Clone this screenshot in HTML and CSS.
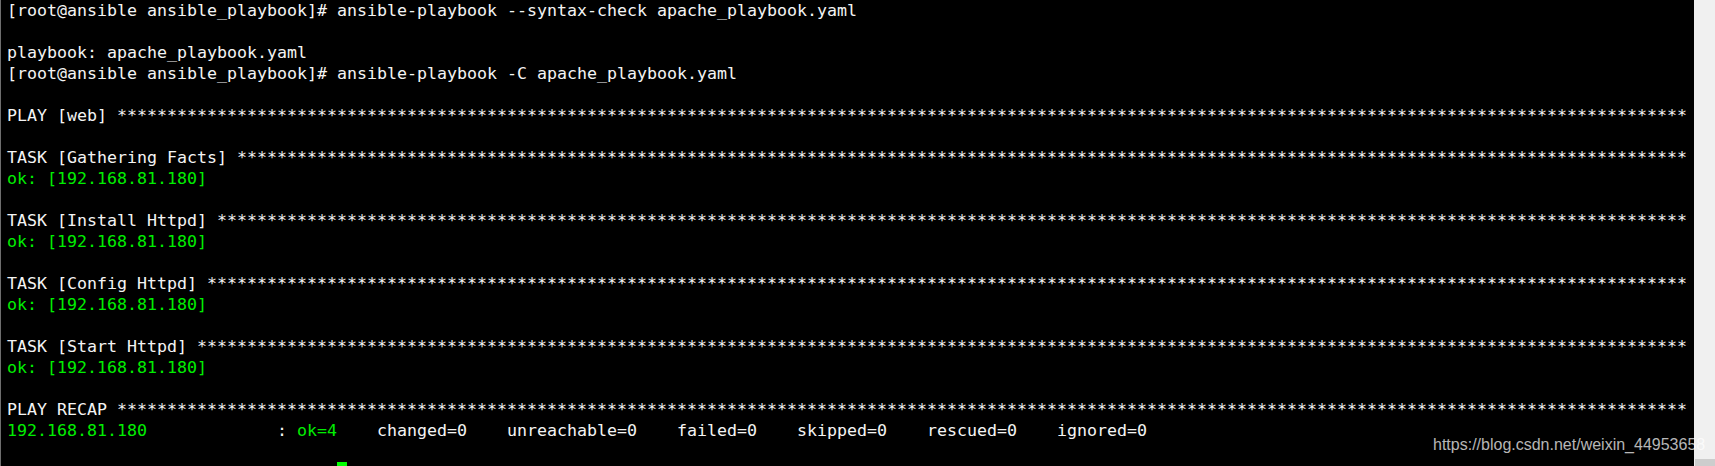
FILE: index.html
```html
<!DOCTYPE html>
<html lang="en">
<head>
<meta charset="utf-8">
<title>ansible-playbook terminal</title>
<link rel="stylesheet" href="styles.css">
</head>
<body>
<div class="window">
  <div class="terminal">
    <div class="ln">[root@ansible ansible_playbook]# ansible-playbook --syntax-check apache_playbook.yaml</div>
    <div class="ln"></div>
    <div class="ln">playbook: apache_playbook.yaml</div>
    <div class="ln">[root@ansible ansible_playbook]# ansible-playbook -C apache_playbook.yaml</div>
    <div class="ln"></div>
    <div class="ln">PLAY [web] *************************************************************************************************************************************************************</div>
    <div class="ln"></div>
    <div class="ln">TASK [Gathering Facts] *************************************************************************************************************************************************</div>
    <div class="ln g">ok: [192.168.81.180]</div>
    <div class="ln"></div>
    <div class="ln">TASK [Install Httpd] ***************************************************************************************************************************************************</div>
    <div class="ln g">ok: [192.168.81.180]</div>
    <div class="ln"></div>
    <div class="ln">TASK [Config Httpd] ****************************************************************************************************************************************************</div>
    <div class="ln g">ok: [192.168.81.180]</div>
    <div class="ln"></div>
    <div class="ln">TASK [Start Httpd] *****************************************************************************************************************************************************</div>
    <div class="ln g">ok: [192.168.81.180]</div>
    <div class="ln"></div>
    <div class="ln">PLAY RECAP *************************************************************************************************************************************************************</div>
    <div class="ln"><span class="g">192.168.81.180</span>             : <span class="g">ok=4</span>    changed=0    unreachable=0    failed=0    skipped=0    rescued=0    ignored=0</div>
    <div class="ln"></div>
    <div class="ln">[root@ansible ansible_playbook]# <span class="cursor"></span></div>
  </div>
  <div class="sidebar">
    <div class="thumb"></div>
  </div>
  <div class="watermark">https://blog.csdn.net/weixin_44953658</div>
</div>
</body>
</html>
```

FILE: styles.css
```css
* {
  box-sizing: border-box;
}

html,
body {
  margin: 0;
  padding: 0;
  background: #f0f0f0;
}

.window {
  position: relative;
  display: flex;
  width: 1715px;
  height: 466px;
  overflow: hidden;
}

.terminal {
  flex: 1;
  min-width: 0;
  background: #000000;
  border-left: 1px solid #6e6e6e;
  padding: 0 0 0 6px;
  color: #f4f4f4;
  font-family: "DejaVu Sans Mono", monospace;
  font-size: 16.61px;
  line-height: 21px;
}

.ln {
  height: 21px;
  white-space: pre;
}

.g {
  color: #00ee00;
}

.cursor {
  display: inline-block;
  width: 1ch;
  height: 21px;
  vertical-align: top;
  background: #00ff00;
}

.watermark {
  position: absolute;
  left: 1433px;
  top: 437px;
  font-family: "Liberation Sans", Arial, sans-serif;
  font-size: 16px;
  line-height: 16px;
  color: rgba(255, 255, 255, 0.72);
  white-space: nowrap;
}

.sidebar {
  flex: 0 0 21px;
  background: #f0f0f0;
  display: flex;
  flex-direction: column;
  justify-content: flex-end;
  padding-left: 1px;
}

.thumb {
  height: 7px;
  background: #cdcdcd;
}
```
